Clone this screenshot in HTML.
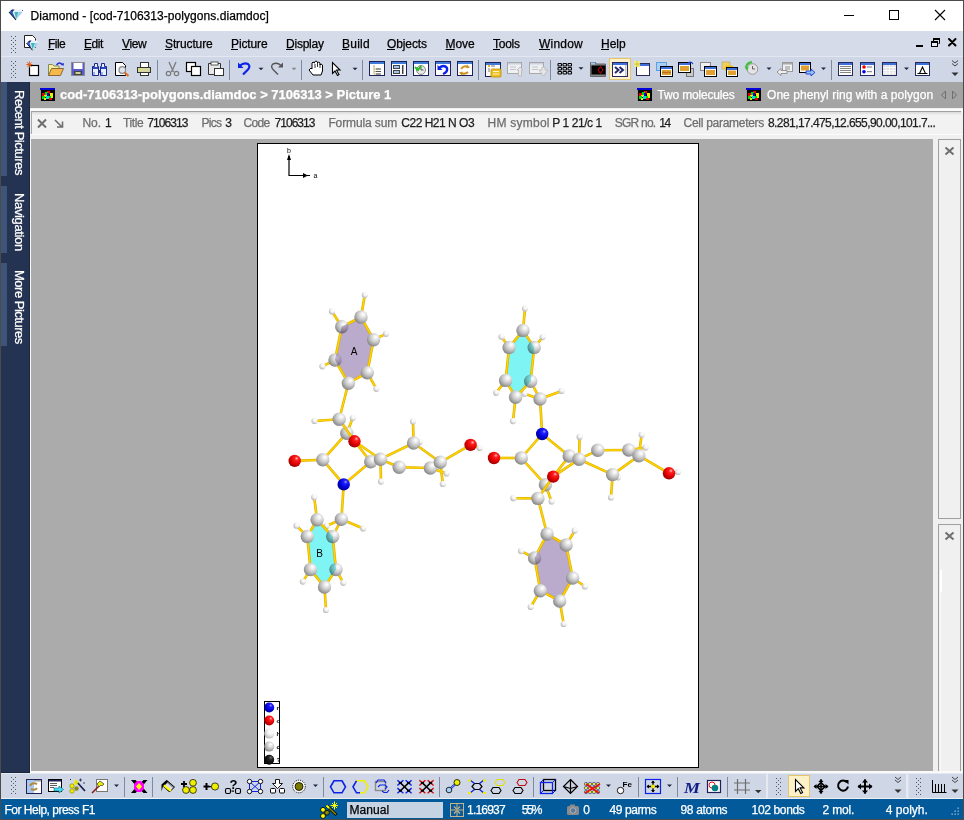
<!DOCTYPE html>
<html><head><meta charset="utf-8">
<style>
html,body{margin:0;padding:0}
body{width:964px;height:820px;position:relative;overflow:hidden;background:#4b4b4b;font-family:"Liberation Sans",sans-serif}
.a{position:absolute}
.t{position:absolute;white-space:nowrap;line-height:1;-webkit-text-stroke:0.25px currentColor}
</style></head><body>
<!-- title bar -->
<div class="a" style="left:1px;top:1px;width:962px;height:30px;background:#fff"></div>
<!-- menubar -->
<div class="a" style="left:1px;top:31px;width:962px;height:25px;background:#d6dbe9"></div>
<div class="a" style="left:1px;top:56px;width:962px;height:1px;background:#e3e7f1"></div>
<!-- toolbar -->
<div class="a" style="left:1px;top:57px;width:962px;height:25px;background:#cfd6e5"></div>
<!-- left sidebar -->
<div class="a" style="left:1px;top:82px;width:29px;height:691px;background:#253352;box-shadow:inset -1px -1px 0 #1b2640"></div>
<div class="a" style="left:1px;top:82px;width:6px;height:94px;background:#3e5478"></div>
<div class="a" style="left:1px;top:186px;width:6px;height:67px;background:#3e5478"></div>
<div class="a" style="left:1px;top:263px;width:6px;height:83px;background:#3e5478"></div>
<!-- doc bar -->
<div class="a" style="left:30px;top:82px;width:933px;height:26px;background:#a4a4a4"></div>
<!-- info strip -->
<div class="a" style="left:30px;top:108px;width:933px;height:31px;background:#f0f0f0"></div>
<div class="a" style="left:30px;top:109px;width:933px;height:2px;background:#fbfbfb"></div>
<div class="a" style="left:30px;top:134px;width:933px;height:1px;background:#fbfbfb"></div>
<div class="a" style="left:31px;top:111px;width:930px;height:23px;box-sizing:border-box;border-top:1px solid #a0a0a0;border-left:1px solid #a8a8a8;background:linear-gradient(#dadada,#e8e8e8 2px,#f2f2f2 3px,#f2f2f2)"></div>
<!-- main grey -->
<div class="a" style="left:30px;top:139px;width:1px;height:634px;background:#fafafa"></div>
<div class="a" style="left:31px;top:139px;width:902px;height:632px;background:#ababab"></div>
<div class="a" style="left:933px;top:139px;width:30px;height:633px;background:#f0f0f0"></div>
<!-- right panels -->
<div class="a" style="left:938px;top:139px;width:23px;height:380px;box-sizing:border-box;border:1px solid #a0a0a0;background:#f0f0f0"></div>
<div class="a" style="left:938px;top:524px;width:23px;height:248px;box-sizing:border-box;border:1px solid #a0a0a0;background:#f0f0f0"></div>
<!-- page -->
<div class="a" style="left:257px;top:143px;width:442px;height:625px;box-sizing:border-box;border:1px solid #000;background:#fff"></div>
<!-- bottom white line + toolbar -->
<div class="a" style="left:30px;top:771px;width:933px;height:2px;background:#fafafa"></div>
<div class="a" style="left:1px;top:773px;width:962px;height:1px;background:#e4e8f1"></div>
<div class="a" style="left:1px;top:774px;width:962px;height:24px;background:#cfd6e5"></div>
<div class="a" style="left:1px;top:798px;width:962px;height:1px;background:#f0f0f0"></div>
<!-- status bar -->
<div class="a" style="left:1px;top:799px;width:962px;height:20px;background:#025a9a"></div>
<div class="a" style="left:347px;top:802px;width:96px;height:16px;background:#c6d3e3"></div>
<div class="t" style="left:25.8px;top:89.5px;font-size:13px;color:#fff;letter-spacing:-0.45px;transform:rotate(90deg);transform-origin:0 0">Recent Pictures</div>
<div class="t" style="left:25.8px;top:193.2px;font-size:13px;color:#fff;letter-spacing:-0.36px;transform:rotate(90deg);transform-origin:0 0">Navigation</div>
<div class="t" style="left:25.8px;top:270px;font-size:13px;color:#fff;letter-spacing:-0.5px;transform:rotate(90deg);transform-origin:0 0">More Pictures</div>
<svg class="a" style="left:0;top:0" width="964" height="820" viewBox="0 0 964 820"><path d="M9,12 L12,9.5 L20.5,9.5 L23,12 L16,19.8 Z" fill="#e6f2f6"/>
<path d="M9.5,12 L12.5,12 L15.5,19 Z" fill="#2f5ad8"/><path d="M14.5,12 L18.5,12 L16,19.5 Z" fill="#38b8b8"/><path d="M19,12 L22.5,12 L16.5,19 Z" fill="#a8c8f0"/><path d="M9.5,11.5 L12,9.5 L14.5,9.5 L12.5,12 Z" fill="#1a2a70"/>
<path d="M9,12 L16,19.8" stroke="#101830" stroke-width="1.1"/><rect x="22" y="10" width="1" height="1" fill="#3050c0"/>
<rect x="844" y="15" width="10" height="1" fill="#000"/>
<rect x="889.5" y="10.5" width="9" height="9" fill="none" stroke="#000"/>
<path d="M935,10 L945,20 M945,10 L935,20" stroke="#000" stroke-width="1.1"/>
<rect x="11" y="36" width="1" height="1" fill="#4a576d"/><rect x="15" y="36" width="1" height="1" fill="#4a576d"/>
<rect x="13" y="38" width="1" height="1" fill="#4a576d"/>
<rect x="11" y="40" width="1" height="1" fill="#4a576d"/><rect x="15" y="40" width="1" height="1" fill="#4a576d"/>
<rect x="13" y="42" width="1" height="1" fill="#4a576d"/>
<rect x="11" y="44" width="1" height="1" fill="#4a576d"/><rect x="15" y="44" width="1" height="1" fill="#4a576d"/>
<rect x="13" y="46" width="1" height="1" fill="#4a576d"/>
<rect x="11" y="48" width="1" height="1" fill="#4a576d"/><rect x="15" y="48" width="1" height="1" fill="#4a576d"/>
<rect x="13" y="50" width="1" height="1" fill="#4a576d"/>
<rect x="11" y="52" width="1" height="1" fill="#4a576d"/><rect x="15" y="52" width="1" height="1" fill="#4a576d"/>
<path d="M24.5,35.5 h8 l3,3 v9 h-11 z" fill="#fff" stroke="#222"/>
<path d="M26.5,43 L29.5,40.5 L37,40.5 L39,43 L32.5,50.3 Z" fill="#e6f2f6"/><path d="M27,43 L29.5,43 L32,50 Z" fill="#2f5ad8"/><path d="M31,43 L35,43 L32.5,50 Z" fill="#38b8b8"/><path d="M35.5,43 L38.5,43 L33,50 Z" fill="#a8c8f0"/><path d="M27,42.5 L29.5,40.5 L31.5,40.5 L29.5,43 Z" fill="#1a2a70"/><path d="M26.5,43 L32.5,50.3" stroke="#101830" stroke-width="1"/>
<rect x="48" y="49" width="6" height="1" fill="#000"/>
<rect x="84" y="49" width="7" height="1" fill="#000"/>
<rect x="122" y="49" width="8" height="1" fill="#000"/>
<rect x="165" y="49" width="7" height="1" fill="#000"/>
<rect x="231" y="49" width="7" height="1" fill="#000"/>
<rect x="286" y="49" width="8" height="1" fill="#000"/>
<rect x="342" y="49" width="7" height="1" fill="#000"/>
<rect x="387" y="49" width="8" height="1" fill="#000"/>
<rect x="445.6" y="49" width="9" height="1" fill="#000"/>
<rect x="493" y="49" width="7" height="1" fill="#000"/>
<rect x="539" y="49" width="11" height="1" fill="#000"/>
<rect x="601" y="49" width="8" height="1" fill="#000"/>
<rect x="916" y="45" width="7" height="2" fill="#000"/>
<path d="M933.5,43.5 v-5 h6 v5 h-1" fill="none" stroke="#000" stroke-width="1"/><rect x="933" y="38" width="7" height="2" fill="#000"/>
<rect x="931.5" y="41.5" width="6" height="5" fill="#e8ebf4" stroke="#000" stroke-width="1"/><rect x="931" y="41" width="7" height="2" fill="#000"/>
<path d="M949,39 L955.5,45.5 M955.5,39 L949,45.5" stroke="#000" stroke-width="2" stroke-linecap="round"/>
<rect x="11" y="61" width="1" height="1" fill="#4a576d"/><rect x="15" y="61" width="1" height="1" fill="#4a576d"/>
<rect x="13" y="63" width="1" height="1" fill="#4a576d"/>
<rect x="11" y="65" width="1" height="1" fill="#4a576d"/><rect x="15" y="65" width="1" height="1" fill="#4a576d"/>
<rect x="13" y="67" width="1" height="1" fill="#4a576d"/>
<rect x="11" y="69" width="1" height="1" fill="#4a576d"/><rect x="15" y="69" width="1" height="1" fill="#4a576d"/>
<rect x="13" y="71" width="1" height="1" fill="#4a576d"/>
<rect x="11" y="73" width="1" height="1" fill="#4a576d"/><rect x="15" y="73" width="1" height="1" fill="#4a576d"/>
<rect x="13" y="75" width="1" height="1" fill="#4a576d"/>
<rect x="11" y="77" width="1" height="1" fill="#4a576d"/><rect x="15" y="77" width="1" height="1" fill="#4a576d"/>
<rect x="29.5" y="65.5" width="9" height="10" fill="#fff" stroke="#000" stroke-width="1.2"/>
<path d="M29.3,61.5 v6 M26.3,64.5 h6 M27.2,62.4 l4.2,4.2 M31.4,62.4 l-4.2,4.2" stroke="#e06020" stroke-width="1"/>
<path d="M48.5,75.5 v-11 h4 l1.5,1.5 h5 v9.5 z" fill="#f6eea0" stroke="#8a8a50"/>
<path d="M48.5,75.5 l3,-7 h12 l-3,7 z" fill="#f5b84a" stroke="#8a6a30"/>
<path d="M56.5,65 q3,-4 6,0" fill="none" stroke="#2030d0" stroke-width="1.3"/><path d="M61,64 l2.5,2 l0.5,-3 z" fill="#2030d0"/>
<rect x="71.5" y="62.5" width="13" height="13" fill="#5a5ad0" stroke="#8a8a8a"/><rect x="73.5" y="63" width="9" height="6" fill="#fff"/><rect x="74" y="71" width="8" height="4" fill="#444"/><rect x="75.5" y="72" width="5" height="2" fill="#d0d090"/>
<path d="M94.5,63.5 h3 v3 h1 v9 h-6 v-9 h2 z M101.5,63.5 h3 v3 h2 v9 h-6 v-9 h1 z" fill="#e8f0fc" stroke="#1a2a90" stroke-width="1"/>
<rect x="93" y="67" width="5" height="2" fill="#2a48c0"/><rect x="101" y="67" width="5" height="2" fill="#2a48c0"/><rect x="98" y="70" width="3" height="3" fill="#1a2a90"/><rect x="93" y="72" width="2" height="3" fill="#9ab0e0"/><rect x="101" y="72" width="2" height="3" fill="#9ab0e0"/>
<path d="M115.5,62.5 h7 l3,3 v10 h-10 z" fill="#fff" stroke="#000"/>
<circle cx="122.3" cy="70" r="3.3" fill="#dde6f0" stroke="#8a8a8a" stroke-width="1.2"/><path d="M124.5,72.5 l4,3.5" stroke="#e07020" stroke-width="2.2"/>
<rect x="140.5" y="62.5" width="8" height="5" fill="#fff" stroke="#333"/><rect x="137.5" y="67.5" width="13" height="5" fill="#d6d6a0" stroke="#333"/><rect x="140.5" y="72.5" width="8" height="3" fill="#fff" stroke="#333"/><rect x="139" y="68.5" width="1" height="1" fill="#ee0"/><rect x="141" y="68.5" width="1" height="1" fill="#ee0"/>
<rect x="157" y="60" width="1" height="20" fill="#7d8aa0"/>
<path d="M169,62 L173.5,72 M176,62 L171.5,72" stroke="#7a7a7a" stroke-width="1.3" fill="none"/><circle cx="168.5" cy="73.5" r="2.2" fill="none" stroke="#7a7a7a" stroke-width="1.2"/><circle cx="176.5" cy="73.5" r="2.2" fill="none" stroke="#7a7a7a" stroke-width="1.2"/>
<rect x="186.5" y="62.5" width="9" height="9" fill="#fff" stroke="#000" stroke-width="1.2"/><rect x="191.5" y="66.5" width="9" height="9" fill="#fff" stroke="#000" stroke-width="1.2"/>
<path d="M208.5,63.5 h12 v11 h-12 z" fill="#e8e8e8" stroke="#333"/><rect x="211" y="62" width="7" height="3" fill="#fff" stroke="#333" stroke-width="0.8"/><rect x="214.5" y="68.5" width="9" height="7" fill="#fff" stroke="#333"/>
<rect x="229" y="60" width="1" height="20" fill="#7d8aa0"/>
<path d="M240,65.5 q4,-3.5 8,-1.5 q3,2.5 -0.5,6 l-4.5,4.5" fill="none" stroke="#0b22e8" stroke-width="2.2"/><path d="M238,62.5 v5.5 h5.5 z" fill="#0b22e8"/>
<path d="M258.5,67.7 h5 l-2.5,2.5 z" fill="#1e2a40"/>
<path d="M281,65.5 q-4,-3.5 -8,-1.5 q-3,2.5 0.5,6 l4.5,4.5" fill="none" stroke="#555" stroke-width="1.4"/><path d="M283,62.5 v5 h-5 z" fill="#555"/>
<path d="M291.5,67.7 h5 l-2.5,2.5 z" fill="#8a8a8a"/>
<rect x="301" y="60" width="1" height="20" fill="#7d8aa0"/>
<path d="M311,68 l-2,2 l4,5 h8 l1.5,-4 v-6 l-1.5,-1 l-1,1 v-2 l-1.5,-1 l-1,1 v-1 l-1.5,-1 l-1.5,1 v1 l-1.5,-1 l-1,1 v6 z" fill="#fff" stroke="#000" stroke-width="1"/>
<path d="M315,64 v4 M317.5,63 v4 M320,64 v4" stroke="#000" stroke-width="0.8"/>
<path d="M332.5,62.5 v11 l2.5,-2.5 l2.5,4.5 l1.5,-1 l-2.5,-4.5 h3.5 z" fill="#fff" stroke="#000" stroke-width="1.1"/>
<path d="M352.5,67.7 h5 l-2.5,2.5 z" fill="#1e2a40"/>
<rect x="362" y="60" width="1" height="20" fill="#7d8aa0"/>
<rect x="369.5" y="61.5" width="15" height="14" fill="#fff" stroke="#1d2157"/>
<rect x="370" y="62" width="14" height="2" fill="#3f7bd8"/>
<path d="M373,66 h2 M374,66 v8 M374,69 h6 M374,71.5 h6 M374,74 h6" stroke="#b0a860" stroke-width="0.8" fill="none"/><path d="M376,69 h5 M376,71.5 h5 M376,74 h5" stroke="#555" stroke-width="1"/>
<rect x="391.5" y="61.5" width="15" height="14" fill="#fff" stroke="#1d2157"/>
<rect x="392" y="62" width="14" height="2" fill="#3f7bd8"/>
<rect x="393.5" y="65.5" width="6" height="3" fill="#9cc4ec" stroke="#444"/><rect x="393.5" y="70.5" width="6" height="3" fill="#9cc4ec" stroke="#444"/><rect x="402" y="65" width="1.5" height="9" fill="#444"/>
<rect x="413.5" y="61.5" width="15" height="14" fill="#fff" stroke="#1d2157"/>
<rect x="414" y="62" width="14" height="2" fill="#3f7bd8"/>
<circle cx="421" cy="70" r="4.5" fill="#e8e8e8" stroke="#888"/><path d="M421,67 v3 h2.5" stroke="#333" stroke-width="0.8" fill="none"/><path d="M415,67 l3,3 l3,-4" stroke="#20c020" stroke-width="2" fill="none"/>
<rect x="435.5" y="61.5" width="15" height="14" fill="#fff" stroke="#1d2157"/>
<rect x="436" y="62" width="14" height="2" fill="#3f7bd8"/>
<path d="M439,68 q5,-4 8,0 q1,4 -4,6" fill="none" stroke="#0b22e8" stroke-width="2.4"/><path d="M437.5,65 v5 h5 z" fill="#0b22e8"/>
<rect x="457.5" y="61.5" width="15" height="14" fill="#fff" stroke="#1d2157"/>
<rect x="458" y="62" width="14" height="2" fill="#3f7bd8"/>
<path d="M461,69 q3,-4 7,-2 M468,72 q-3,3 -7,1" stroke="#d09020" stroke-width="2" fill="none"/><path d="M467,64.5 l3,3 l-3.5,1 z M462,75.5 l-3,-3 l3.5,-1 z" fill="#d09020"/>
<rect x="478" y="60" width="1" height="20" fill="#7d8aa0"/>
<rect x="485.5" y="62.5" width="15" height="14" fill="#fff" stroke="#1d2157"/>
<rect x="486" y="63" width="14" height="2" fill="#3f7bd8"/>
<rect x="491" y="69" width="10" height="8" rx="1" fill="#f0c020" stroke="#c09000" stroke-width="0.8"/><path d="M493,71.5 h6 M493,74 h6" stroke="#fff" stroke-width="0.8"/><rect x="488" y="65" width="2" height="2" fill="#f4b020"/><path d="M491,66 h4 M488,69 h2 M488,71 h2" stroke="#444" stroke-width="0.7"/>
<rect x="507.5" y="62.5" width="14" height="11" fill="#eef0f4" stroke="#a8a8a8"/><rect x="508" y="63" width="13" height="1.5" fill="#c8d0e0"/><path d="M510,67 h6 M510,69.5 h6" stroke="#b8b8b8" stroke-width="0.8"/>
<rect x="529.5" y="62.5" width="14" height="11" fill="#eef0f4" stroke="#a8a8a8"/><rect x="530" y="63" width="13" height="1.5" fill="#c8d0e0"/><path d="M532,67 h6 M532,69.5 h6" stroke="#b8b8b8" stroke-width="0.8"/>
<path d="M517,70 l3,-3 l3,3 h-1.5 v6 h-3 v-6 z" fill="#e6e6e6" stroke="#b8b8b8" stroke-width="0.8"/>
<path d="M539,70 h3 v-3 h3 v3 h3 l-4.5,6 z" fill="#e6e6e6" stroke="#b8b8b8" stroke-width="0.8"/>
<rect x="550" y="60" width="1" height="20" fill="#7d8aa0"/>
<rect x="558" y="63.5" width="3.5" height="2.5" rx="0.7" fill="none" stroke="#000" stroke-width="1.1"/>
<rect x="563" y="63.5" width="3.5" height="2.5" rx="0.7" fill="none" stroke="#000" stroke-width="1.1"/>
<rect x="568" y="63.5" width="3.5" height="2.5" rx="0.7" fill="none" stroke="#000" stroke-width="1.1"/>
<rect x="558" y="67.5" width="3.5" height="2.5" rx="0.7" fill="none" stroke="#000" stroke-width="1.1"/>
<rect x="563" y="67.5" width="3.5" height="2.5" rx="0.7" fill="none" stroke="#000" stroke-width="1.1"/>
<rect x="568" y="67.5" width="3.5" height="2.5" rx="0.7" fill="none" stroke="#000" stroke-width="1.1"/>
<rect x="558" y="71.5" width="3.5" height="2.5" rx="0.7" fill="none" stroke="#000" stroke-width="1.1"/>
<rect x="563" y="71.5" width="3.5" height="2.5" rx="0.7" fill="none" stroke="#000" stroke-width="1.1"/>
<rect x="568" y="71.5" width="3.5" height="2.5" rx="0.7" fill="none" stroke="#000" stroke-width="1.1"/>
<path d="M578.5,67.3 h5 l-2.5,2.5 z" fill="#1e2a40"/>
<path d="M590.5,76.5 v-14 h5 l1,1.5 h9 v12.5 z" fill="#888" stroke="#666"/><rect x="591" y="62.5" width="4" height="2" fill="#9cc8f0"/><rect x="591.5" y="65.5" width="14" height="9" fill="#000"/><path d="M600.5,66.5 l2.5,3.5 l-2.5,3.5 l-2.5,-3.5 z" fill="none" stroke="#e00000" stroke-width="1"/>
<rect x="609.5" y="58.5" width="21" height="21" fill="#fcf1c8" stroke="#e4c56c"/>
<rect x="612.5" y="62.5" width="15" height="14" fill="#fff" stroke="#252a5a"/>
<rect x="613" y="63" width="14" height="2" fill="#3f6fd8"/>
<path d="M615,67 l3.5,3 l-3.5,3 M619.5,67 l3.5,3 l-3.5,3" fill="none" stroke="#252a6a" stroke-width="2"/><rect x="625" y="65" width="1.5" height="11" fill="#c8c8c8"/>
<rect x="636.5" y="63.5" width="13" height="12" fill="#fff" stroke="#252a5a"/><rect x="637" y="64" width="12" height="2" fill="#3f6fd8"/><rect x="634" y="61" width="6" height="6" fill="#f0f080" opacity="0.9"/><path d="M637,61 v6 M634,64 h6" stroke="#e0c020" stroke-width="0.8"/>
<rect x="656.5" y="62.5" width="10" height="8" fill="#a8d0f4" stroke="#5aa0e8"/>
<rect x="660.5" y="66.5" width="12" height="10" fill="#fff" stroke="#000"/>
<rect x="661" y="67" width="11" height="2" fill="#3f6fd8"/>
<rect x="662" y="70" width="9" height="5" fill="#e0a030"/><path d="M662,73 q2,-2 4,0 q2,-2 5,0" fill="none" stroke="#b06010" stroke-width="1"/>
<rect x="686.5" y="68.5" width="7" height="8" fill="#c8c8c8" stroke="#777"/>
<rect x="678.5" y="62.5" width="12" height="10" fill="#fff" stroke="#000"/>
<rect x="679" y="63" width="11" height="2" fill="#3f6fd8"/>
<rect x="680" y="66" width="9" height="5" fill="#e0a030"/><path d="M688,63 q3,-2 5,1" stroke="#2040d0" stroke-width="1.2" fill="none"/>
<rect x="700.5" y="62.5" width="10" height="8" fill="#f0f0f0" stroke="#888"/>
<rect x="704.5" y="66.5" width="12" height="10" fill="#fff" stroke="#000"/>
<rect x="705" y="67" width="11" height="2" fill="#3f6fd8"/>
<rect x="706" y="70" width="9" height="5" fill="#e0a030"/>
<rect x="722" y="62" width="8" height="7" fill="#f0d060" stroke="#b0a060" stroke-width="0.6"/><rect x="725" y="65.5" width="8" height="5" fill="#f0c020"/>
<rect x="726.5" y="67.5" width="11" height="9" fill="#fff" stroke="#000"/>
<rect x="727" y="68" width="10" height="2" fill="#3f6fd8"/>
<rect x="728" y="70.5" width="8" height="4.5" fill="#e0a030"/>
<circle cx="752.5" cy="69" r="5.3" fill="#e4e4e4" stroke="#999"/><path d="M752.5,66 v3 h2.5" stroke="#444" stroke-width="0.8" fill="none"/><path d="M746,68 q0,-5 6,-6" stroke="#40c040" stroke-width="2" fill="none"/><path d="M744.5,66.5 l2,4 l2.5,-3 z" fill="#40c040"/>
<path d="M766.5,67.5 h5 l-2.5,2.5 z" fill="#1e2a40"/>
<rect x="782.5" y="62.5" width="10" height="9" fill="#f0f0f0" stroke="#999"/><rect x="783" y="63" width="9" height="1.5" fill="#aaa"/><rect x="785" y="66" width="5" height="4" fill="#c0c0c0"/>
<path d="M777,72 l4,-3.5 v2 h6 v3 h-6 v2 z" fill="#f0f0f0" stroke="#8a8a8a" stroke-width="0.9"/>
<rect x="799.5" y="62.5" width="11" height="10" fill="#fff" stroke="#000"/>
<rect x="800" y="63" width="10" height="2" fill="#3f6fd8"/>
<rect x="801" y="65.5" width="8" height="5" fill="#e0a030"/><path d="M815,72.5 l-4,-3.5 v2 h-5 v3 h5 v2 z" fill="#90c0f8" stroke="#1a3ad0" stroke-width="0.9"/>
<path d="M821,67.5 h5 l-2.5,2.5 z" fill="#1e2a40"/>
<rect x="831" y="60" width="1" height="20" fill="#7d8aa0"/>
<rect x="838.5" y="62.5" width="14" height="13" fill="#fff" stroke="#252a5a"/>
<rect x="839" y="63" width="13" height="2" fill="#3f6fd8"/>
<path d="M840,66.5 h11 M840,68.5 h11 M840,70.5 h11 M840,72.5 h11" stroke="#777" stroke-width="0.9"/>
<rect x="860.5" y="62.5" width="14" height="13" fill="#fff" stroke="#252a5a"/>
<rect x="861" y="63" width="13" height="2" fill="#3f6fd8"/>
<circle cx="864" cy="67" r="1.8" fill="#e00"/><circle cx="864" cy="71.7" r="1.8" fill="#00e"/><path d="M867,67 h5 M867,71.7 h5" stroke="#777" stroke-width="1"/>
<rect x="882.5" y="62.5" width="14" height="13" fill="#e0e0e0" stroke="#252a5a"/>
<rect x="883" y="63" width="13" height="2" fill="#3f6fd8"/>
<path d="M883,67.5 h13 M883,70.5 h13 M883,73 h13 M886,65 v10 M889.5,65 v10 M893,65 v10" stroke="#fff" stroke-width="0.8"/>
<path d="M904,67.5 h5 l-2.5,2.5 z" fill="#1e2a40"/>
<rect x="915.5" y="62.5" width="14" height="13" fill="#fff" stroke="#252a5a"/>
<rect x="916" y="63" width="13" height="2" fill="#3f6fd8"/>
<path d="M917.5,73.5 h10 M919.5,73.5 l3,-6.5 l3,6.5" fill="none" stroke="#000" stroke-width="1.1"/>
<path d="M952,60.5 l3,2.5 l3,-2.5 M952,63.5 l3,2.5 l3,-2.5" fill="none" stroke="#333" stroke-width="0.9"/><path d="M951.5,72.5 h7 l-3.5,3.5 z" fill="#333"/>
<rect x="40" y="88" width="15" height="13" fill="#000"/><rect x="40" y="88" width="15" height="2" fill="#0000d8"/><rect x="40" y="90" width="1" height="11" fill="#9a9a9a"/>
<rect x="47" y="91" width="3" height="3" fill="#ee0000"/>
<rect x="45" y="92" width="3" height="3" fill="#00dd00"/>
<rect x="42" y="93" width="3" height="3" fill="#ee0000"/>
<rect x="50" y="93" width="3" height="3" fill="#eeee00"/>
<rect x="47" y="93" width="2" height="4" fill="#0000ee"/>
<rect x="44" y="95" width="3" height="2" fill="#eeee00"/>
<rect x="42" y="96" width="3" height="3" fill="#00dd00"/>
<rect x="46" y="96" width="3" height="3" fill="#00dddd"/>
<rect x="49" y="96" width="3" height="3" fill="#00dd00"/>
<rect x="51" y="95" width="2" height="3" fill="#eeee00"/>
<rect x="49" y="98" width="3" height="2" fill="#ee0000"/>
<rect x="44" y="98" width="2" height="2" fill="#eeee00"/>
<rect x="637" y="88" width="15" height="13" fill="#000"/><rect x="637" y="88" width="15" height="2" fill="#0000d8"/><rect x="637" y="90" width="1" height="11" fill="#9a9a9a"/>
<rect x="644" y="91" width="3" height="3" fill="#ee0000"/>
<rect x="642" y="92" width="3" height="3" fill="#00dd00"/>
<rect x="639" y="93" width="3" height="3" fill="#ee0000"/>
<rect x="647" y="93" width="3" height="3" fill="#eeee00"/>
<rect x="644" y="93" width="2" height="4" fill="#0000ee"/>
<rect x="641" y="95" width="3" height="2" fill="#eeee00"/>
<rect x="639" y="96" width="3" height="3" fill="#00dd00"/>
<rect x="643" y="96" width="3" height="3" fill="#00dddd"/>
<rect x="646" y="96" width="3" height="3" fill="#00dd00"/>
<rect x="648" y="95" width="2" height="3" fill="#eeee00"/>
<rect x="646" y="98" width="3" height="2" fill="#ee0000"/>
<rect x="641" y="98" width="2" height="2" fill="#eeee00"/>
<rect x="746" y="88" width="15" height="13" fill="#000"/><rect x="746" y="88" width="15" height="2" fill="#0000d8"/><rect x="746" y="90" width="1" height="11" fill="#9a9a9a"/>
<rect x="753" y="91" width="3" height="3" fill="#ee0000"/>
<rect x="751" y="92" width="3" height="3" fill="#00dd00"/>
<rect x="748" y="93" width="3" height="3" fill="#ee0000"/>
<rect x="756" y="93" width="3" height="3" fill="#eeee00"/>
<rect x="753" y="93" width="2" height="4" fill="#0000ee"/>
<rect x="750" y="95" width="3" height="2" fill="#eeee00"/>
<rect x="748" y="96" width="3" height="3" fill="#00dd00"/>
<rect x="752" y="96" width="3" height="3" fill="#00dddd"/>
<rect x="755" y="96" width="3" height="3" fill="#00dd00"/>
<rect x="757" y="95" width="2" height="3" fill="#eeee00"/>
<rect x="755" y="98" width="3" height="2" fill="#ee0000"/>
<rect x="750" y="98" width="2" height="2" fill="#eeee00"/>
<path d="M945.5,91 l-4,4 l4,4 z" fill="none" stroke="#6e6e6e"/><path d="M952.5,91 l4,4 l-4,4 z" fill="none" stroke="#6e6e6e"/>
<path d="M38,119.5 l8,8 M46,119.5 l-8,8" stroke="#6e6e6e" stroke-width="2"/>
<path d="M55,120 l6.5,6.5 M62.5,121.5 v5.5 h-5.5" stroke="#6e6e6e" stroke-width="1.6" fill="none"/>
<path d="M945.5,147.5 l8,7 M953.5,147.5 l-8,7" stroke="#6e6e6e" stroke-width="2"/>
<path d="M945.5,532.5 l8,7 M953.5,532.5 l-8,7" stroke="#6e6e6e" stroke-width="2"/>
<rect x="940" y="570" width="2" height="22" fill="#fff"/><rect x="940" y="592" width="1" height="178" fill="#fafafa"/>
<rect x="11" y="777" width="1" height="1" fill="#4a576d"/><rect x="15" y="777" width="1" height="1" fill="#4a576d"/>
<rect x="13" y="779" width="1" height="1" fill="#4a576d"/>
<rect x="11" y="781" width="1" height="1" fill="#4a576d"/><rect x="15" y="781" width="1" height="1" fill="#4a576d"/>
<rect x="13" y="783" width="1" height="1" fill="#4a576d"/>
<rect x="11" y="785" width="1" height="1" fill="#4a576d"/><rect x="15" y="785" width="1" height="1" fill="#4a576d"/>
<rect x="13" y="787" width="1" height="1" fill="#4a576d"/>
<rect x="11" y="789" width="1" height="1" fill="#4a576d"/><rect x="15" y="789" width="1" height="1" fill="#4a576d"/>
<rect x="13" y="791" width="1" height="1" fill="#4a576d"/>
<rect x="11" y="793" width="1" height="1" fill="#4a576d"/><rect x="15" y="793" width="1" height="1" fill="#4a576d"/>
<rect x="26.5" y="779.5" width="15" height="14" fill="#fff" stroke="#1d2157"/><rect x="27" y="780" width="7" height="13" fill="#a8c8f0"/><rect x="34" y="780" width="7" height="1.5" fill="#a0a0a0"/><path d="M30,786 q2,-4 7,-2 M37,788 q-2,3 -6,1" stroke="#b08a40" stroke-width="2" fill="none"/>
<rect x="48.5" y="779.5" width="13" height="12" fill="#fff" stroke="#000"/><rect x="49" y="780" width="12" height="1.5" fill="#1d2157"/><path d="M50,783.5 h7 M50,785.5 h7 M50,787.5 h4" stroke="#333" stroke-width="0.8"/><path d="M54,788 h5 v-2 l4.5,3.5 l-4.5,3.5 v-2 h-5 z" fill="#40e0f0" stroke="#1a5a80" stroke-width="0.6"/>
<circle cx="72" cy="786" r="2.2" fill="#ee0" stroke="#660" stroke-width="0.5"/><circle cx="72" cy="791" r="2.2" fill="#ee0" stroke="#660" stroke-width="0.5"/><circle cx="76.5" cy="788.5" r="2.2" fill="#8a8a20"/><circle cx="76" cy="783" r="2" fill="#ee0"/><path d="M76,781 l9,10" stroke="#1d2157" stroke-width="1.8"/><path d="M75,780 l3,3" stroke="#ee0" stroke-width="1.8"/><path d="M79,780 h3 M80.5,778.5 v3 M83,783 h2" stroke="#1d2157" stroke-width="0.8"/><rect x="70" y="779" width="1" height="1" fill="#1d2157"/>
<rect x="96.5" y="779.5" width="11" height="12" fill="#fff" stroke="#777"/><path d="M92,793 l7,-7" stroke="#8a1a1a" stroke-width="1.6"/><path d="M97,784 l3,-3 l4,3 l-2,2 l-1,-1 l-2,2 z" fill="#ee0" stroke="#333" stroke-width="0.7"/>
<path d="M114,784.6 h5 l-2.5,2.5 z" fill="#1e2a40"/>
<rect x="124" y="777" width="1" height="20" fill="#7d8aa0"/>
<path d="M131,780 h4.5 l4,4 l4,-4 h4 l-5.5,6.5 l5.5,6.5 h-4 l-4,-4 l-4,4 h-4.5 l5.5,-6.5 z" fill="#000"/>
<path d="M137,781 h4 l3,3 v5 l-3,3 h-4 l-3,-3 v-5 z" fill="#ff00ff"/><path d="M139,783 l3,3.5 l-3,3.5 l-3,-3.5 z" fill="#ffff00"/>
<rect x="152" y="777" width="1" height="20" fill="#7d8aa0"/>
<path d="M161.5,791.5 v-7 l5,-4.5 l1,0.5 l7.5,6.5 l-5,5 l-1,0 l-6,-5.5 z" fill="#000"/>
<path d="M164,786 l3.5,-3.5 l6,5 l-3.5,3.5 z" fill="#d8dce8"/><path d="M164,786 l6,5 l0.8,-0.8 l-6,-5 z" fill="#ffff00" stroke="#ffff00" stroke-width="1.2"/><path d="M167.5,782.5 l6,5" stroke="#888" stroke-width="1.2"/>
<path d="M181,784 h6 M184,781 v6" stroke="#000" stroke-width="1.8"/><circle cx="193" cy="782.8" r="3.4" fill="#ee0" stroke="#000" stroke-width="0.7"/><circle cx="186" cy="790" r="3.4" fill="#ee0" stroke="#000" stroke-width="0.7"/><circle cx="193" cy="790" r="3.4" fill="#ee0" stroke="#000" stroke-width="0.7"/>
<path d="M203.5,786.5 h6 M206.5,783 v7" stroke="#000" stroke-width="2"/><rect x="209" y="786" width="3" height="1.2" fill="#000"/><circle cx="215" cy="786.5" r="3.6" fill="#ee0" stroke="#000" stroke-width="0.7"/>
<text x="229.5" y="788.5" font-family="Liberation Sans" font-weight="bold" font-size="13" fill="#000">?</text><rect x="225.5" y="788.5" width="5" height="5" rx="1.5" fill="none" stroke="#000" stroke-width="1.1"/><rect x="235.5" y="788.5" width="5" height="5" rx="1.5" fill="none" stroke="#000" stroke-width="1.1"/><rect x="231.5" y="790.5" width="2.5" height="1.2" fill="#000"/>
<path d="M249.5,781.5 h11 v10 h-11 z M249.5,781.5 l11,10 M260.5,781.5 l-11,10" fill="none" stroke="#0b22e8" stroke-width="1"/>
<circle cx="249.5" cy="781.5" r="2.2" fill="#fff" stroke="#000" stroke-width="0.9"/>
<circle cx="260.5" cy="781.5" r="2.2" fill="#fff" stroke="#000" stroke-width="0.9"/>
<circle cx="249.5" cy="791.5" r="2.2" fill="#fff" stroke="#000" stroke-width="0.9"/>
<circle cx="260.5" cy="791.5" r="2.2" fill="#fff" stroke="#000" stroke-width="0.9"/>
<rect x="270.5" y="788.5" width="5" height="4.5" rx="1" fill="#fff" stroke="#000"/><rect x="279.5" y="788.5" width="5" height="4.5" rx="1" fill="#fff" stroke="#000"/><path d="M275.5,779.5 h4 v4 h3 l-5,5 l-5,-5 h3 z" fill="#fff" stroke="#000" stroke-width="0.9"/>
<circle cx="299" cy="786.5" r="6.3" fill="#fff" stroke="#000" stroke-width="1" stroke-dasharray="1,1"/><circle cx="299" cy="786.5" r="4" fill="#7a7a00" stroke="#000" stroke-width="0.8"/>
<path d="M313,784.5 h5 l-2.5,2.5 z" fill="#1e2a40"/>
<rect x="323" y="777" width="1" height="20" fill="#7d8aa0"/>
<path d="M334,780.8 h8 l3.5,6 l-3.5,6 h-8 l-3.5,-6 z" fill="none" stroke="#0b22e8" stroke-width="1.6"/>
<path d="M356.5,780.8 h8 l3.5,6 l-3.5,6 h-4.5" fill="none" stroke="#f0f000" stroke-width="1.6"/><path d="M360,792.8 h-3.5 l-3.5,-6 l3.5,-6" fill="none" stroke="#0b22e8" stroke-width="1.6"/>
<rect x="375.5" y="781.5" width="10" height="9" fill="none" stroke="#8a8a8a" stroke-width="1.4"/><path d="M376,783 l2,-3 h6 l2,3 M378,787 l2,-2 h5 l2,2 l-2,2 M382,791 l2,1.5 h3 l2,-2.5" fill="none" stroke="#0b22e8" stroke-width="1.2"/>
<path d="M400.4,782.9 l-3,-2.6 M400.4,782.9 l3,-2.6 M400.4,782.9 l-3,2.6 M408.6,782.9 l-3,-2.6 M408.6,782.9 l3,-2.6 M408.6,782.9 l3,2.6 M400.4,790.7 l-3,-2.6 M400.4,790.7 l-3,2.6 M400.4,790.7 l3,2.6 M408.6,790.7 l3,-2.6 M408.6,790.7 l-3,2.6 M408.6,790.7 l3,2.6" stroke="#0b22e8" stroke-width="1.4" fill="none"/><path d="M400.4,782.9 L408.6,790.7 M408.6,782.9 L400.4,790.7" stroke="#000" stroke-width="1.5"/><rect x="398.9" y="781.9" width="3" height="2" fill="#000"/><rect x="407.1" y="781.9" width="3" height="2" fill="#000"/><rect x="398.9" y="789.7" width="3" height="2" fill="#000"/><rect x="407.1" y="789.7" width="3" height="2" fill="#000"/>
<path d="M422.4,782.9 l-3,-2.6 M422.4,782.9 l3,-2.6 M422.4,782.9 l-3,2.6 M430.6,782.9 l-3,-2.6 M430.6,782.9 l3,-2.6 M430.6,782.9 l3,2.6 M422.4,790.7 l-3,-2.6 M422.4,790.7 l-3,2.6 M422.4,790.7 l3,2.6 M430.6,790.7 l3,-2.6 M430.6,790.7 l-3,2.6 M430.6,790.7 l3,2.6" stroke="#d01010" stroke-width="1.4" fill="none"/><path d="M422.4,782.9 L430.6,790.7 M430.6,782.9 L422.4,790.7" stroke="#000" stroke-width="1.5"/><rect x="420.9" y="781.9" width="3" height="2" fill="#000"/><rect x="429.1" y="781.9" width="3" height="2" fill="#000"/><rect x="420.9" y="789.7" width="3" height="2" fill="#000"/><rect x="429.1" y="789.7" width="3" height="2" fill="#000"/>
<rect x="439" y="777" width="1" height="20" fill="#7d8aa0"/>
<path d="M449,790 l8,-7.5" stroke="#0b22e8" stroke-width="2.2"/><path d="M449,790 l8,-7.5" stroke="#a8d0f0" stroke-width="0.8"/><circle cx="449" cy="790" r="2.8" fill="#a8d0f0" stroke="#000" stroke-width="0.8"/><circle cx="457" cy="782.5" r="3" fill="#ee0" stroke="#000" stroke-width="0.8"/>
<path d="M472,786.5 l2.5,-3 h5 l2.5,3 l-2.5,3 h-5 z" fill="none" stroke="#000" stroke-width="1.2"/><path d="M474.5,783.5 l-4.5,-3.5 M479.5,783.5 l4.5,-3.5 M474.5,789.5 l-4.5,3.5 M479.5,789.5 l4.5,3.5" stroke="#0b22e8" stroke-width="1.3"/><rect x="468" y="779.5" width="3" height="2" fill="#ee0"/><rect x="483" y="779.5" width="3" height="2" fill="#ee0"/><rect x="468" y="792" width="3" height="2" fill="#ee0"/><rect x="483" y="792" width="3" height="2" fill="#ee0"/>
<path d="M495,782.5 l2,-3 h6 l2,3 l-2,3 h-6 z" fill="none" stroke="#e0e000" stroke-width="1.1"/><path d="M491,790.5 l2,-3 h6 l2,3 l-2,3 h-6 z" fill="none" stroke="#000" stroke-width="1.1"/>
<path d="M517,782.5 l2,-3 h6 l2,3 l-2,3 h-6 z" fill="none" stroke="#c01010" stroke-width="1.1"/><path d="M513,790.5 l2,-3 h6 l2,3 l-2,3 h-6 z" fill="none" stroke="#000" stroke-width="1.1"/>
<rect x="533" y="777" width="1" height="20" fill="#7d8aa0"/>
<rect x="543.5" y="779.5" width="12" height="11" fill="none" stroke="#000" stroke-width="1.3"/><rect x="540.5" y="782.5" width="12" height="11" fill="none" stroke="#0b22e8" stroke-width="1.3"/><path d="M540.5,782.5 l3,-3 M552.5,782.5 l3,-3 M540.5,793.5 l3,-3 M552.5,793.5 l3,-3" stroke="#0b22e8" stroke-width="1"/>
<path d="M570.5,779.5 l7,7 l-7,7 l-7,-7 z M570.5,779.5 v14 M563.5,786.5 l7,2 l7,-2" fill="none" stroke="#000" stroke-width="1.2"/>
<circle cx="586" cy="784" r="1.7" fill="#ee0" stroke="#1a2ad0" stroke-width="0.6"/>
<circle cx="590" cy="784" r="1.7" fill="#ee0" stroke="#1a2ad0" stroke-width="0.6"/>
<circle cx="594" cy="784" r="1.7" fill="#ee0" stroke="#1a2ad0" stroke-width="0.6"/>
<circle cx="598" cy="784" r="1.7" fill="#ee0" stroke="#1a2ad0" stroke-width="0.6"/>
<circle cx="586" cy="788" r="1.7" fill="#ee0" stroke="#1a2ad0" stroke-width="0.6"/>
<circle cx="590" cy="788" r="1.7" fill="#ee0" stroke="#1a2ad0" stroke-width="0.6"/>
<circle cx="594" cy="788" r="1.7" fill="#ee0" stroke="#1a2ad0" stroke-width="0.6"/>
<circle cx="598" cy="788" r="1.7" fill="#ee0" stroke="#1a2ad0" stroke-width="0.6"/>
<circle cx="586" cy="792" r="1.7" fill="#ee0" stroke="#1a2ad0" stroke-width="0.6"/>
<circle cx="590" cy="792" r="1.7" fill="#ee0" stroke="#1a2ad0" stroke-width="0.6"/>
<circle cx="594" cy="792" r="1.7" fill="#ee0" stroke="#1a2ad0" stroke-width="0.6"/>
<circle cx="598" cy="792" r="1.7" fill="#ee0" stroke="#1a2ad0" stroke-width="0.6"/>
<path d="M585,793 l15,-9 M586,784 l13,9" stroke="#ee1010" stroke-width="1.6"/>
<path d="M606,784.5 h5 l-2.5,2.5 z" fill="#1e2a40"/>
<circle cx="620.5" cy="790.5" r="3.2" fill="#fff" stroke="#000" stroke-width="0.9"/><text x="622.5" y="786.5" font-family="Liberation Sans" font-weight="bold" font-size="8" fill="#000">Fe</text>
<rect x="638" y="777" width="1" height="20" fill="#7d8aa0"/>
<rect x="645.5" y="779.5" width="15" height="14" fill="none" stroke="#0b22e8" stroke-width="1.2"/><path d="M653,781 v11 M647,786.5 h12" stroke="#000" stroke-width="1.4"/><path d="M653,780.5 l-2,2.5 h4 z M653,792.5 l-2,-2.5 h4 z M646.5,786.5 l2.5,-2 v4 z M659.5,786.5 l-2.5,-2 v4 z" fill="#000"/><circle cx="653" cy="786.5" r="2" fill="#ee0"/>
<path d="M667,784.5 h5 l-2.5,2.5 z" fill="#1e2a40"/>
<rect x="677" y="777" width="1" height="20" fill="#7d8aa0"/>
<text x="684" y="792.5" font-family="Liberation Serif" font-weight="bold" font-style="italic" font-size="14.5" fill="#10208a" textLength="16" lengthAdjust="spacingAndGlyphs">M</text>
<rect x="707.5" y="780.5" width="13" height="12" fill="#fff" stroke="#1d2157" stroke-width="1.2"/><circle cx="712" cy="785" r="3" fill="none" stroke="#e00000" stroke-width="0.9"/><circle cx="715" cy="788" r="3.3" fill="#008080"/>
<rect x="727" y="777" width="1" height="20" fill="#7d8aa0"/>
<path d="M734,783 h16 M734,790 h16 M737.5,779 v15 M745.5,779 v15" stroke="#6e6e6e" stroke-width="1.2"/>
<path d="M755,790 h6.5 l-3.25,3.25 z" fill="#333"/>
<rect x="766" y="773" width="2" height="25" fill="#e6e9f2"/>
<rect x="776" y="778" width="1" height="1" fill="#4a576d"/><rect x="780" y="778" width="1" height="1" fill="#4a576d"/>
<rect x="778" y="780" width="1" height="1" fill="#4a576d"/>
<rect x="776" y="782" width="1" height="1" fill="#4a576d"/><rect x="780" y="782" width="1" height="1" fill="#4a576d"/>
<rect x="778" y="784" width="1" height="1" fill="#4a576d"/>
<rect x="776" y="786" width="1" height="1" fill="#4a576d"/><rect x="780" y="786" width="1" height="1" fill="#4a576d"/>
<rect x="778" y="788" width="1" height="1" fill="#4a576d"/>
<rect x="776" y="790" width="1" height="1" fill="#4a576d"/><rect x="780" y="790" width="1" height="1" fill="#4a576d"/>
<rect x="778" y="792" width="1" height="1" fill="#4a576d"/>
<rect x="776" y="794" width="1" height="1" fill="#4a576d"/><rect x="780" y="794" width="1" height="1" fill="#4a576d"/>
<rect x="788.5" y="775.5" width="21" height="21" fill="#fcf1c8" stroke="#e4c56c"/>
<path d="M795.5,779.5 v12 l2.8,-2.8 l2.5,4.8 l1.8,-1 l-2.5,-4.6 h3.8 z" fill="#fff" stroke="#000" stroke-width="1.1"/>
<path d="M814,786.5 h14 M821,779.5 v14" stroke="#000" stroke-width="1.5"/><path d="M821,779 l-2.5,3 h5 z M821,794 l-2.5,-3 h5 z M813.5,786.5 l3,-2.5 v5 z M828.5,786.5 l-3,-2.5 v5 z" fill="#000"/><path d="M821,782.5 l4,4 l-4,4 l-4,-4 z" fill="none" stroke="#000" stroke-width="1.6"/>
<path d="M847,782.5 a5,5 0 1 0 1,4" fill="none" stroke="#000" stroke-width="2"/><path d="M844,780 l4.5,0 l0,4.5 z" fill="#000"/>
<path d="M858,786.5 h14 M865,779.5 v14" stroke="#000" stroke-width="2"/><path d="M865,779 l-3,3.5 h6 z M865,794 l-3,-3.5 h6 z M857.5,786.5 l3.5,-3 v6 z M872.5,786.5 l-3.5,-3 v6 z" fill="#000"/>
<path d="M895,777 l3,2.5 l3,-2.5 M895,780 l3,2.5 l3,-2.5" fill="none" stroke="#333" stroke-width="0.9"/><path d="M894.5,789.5 h7 l-3.5,3.5 z" fill="#333"/>
<rect x="906" y="773" width="2.5" height="25" fill="#e6e9f2"/>
<rect x="916" y="778" width="1" height="1" fill="#4a576d"/><rect x="920" y="778" width="1" height="1" fill="#4a576d"/>
<rect x="918" y="780" width="1" height="1" fill="#4a576d"/>
<rect x="916" y="782" width="1" height="1" fill="#4a576d"/><rect x="920" y="782" width="1" height="1" fill="#4a576d"/>
<rect x="918" y="784" width="1" height="1" fill="#4a576d"/>
<rect x="916" y="786" width="1" height="1" fill="#4a576d"/><rect x="920" y="786" width="1" height="1" fill="#4a576d"/>
<rect x="918" y="788" width="1" height="1" fill="#4a576d"/>
<rect x="916" y="790" width="1" height="1" fill="#4a576d"/><rect x="920" y="790" width="1" height="1" fill="#4a576d"/>
<rect x="918" y="792" width="1" height="1" fill="#4a576d"/>
<rect x="916" y="794" width="1" height="1" fill="#4a576d"/><rect x="920" y="794" width="1" height="1" fill="#4a576d"/>
<path d="M932.5,780 v12.5 h14 M935.5,784 v8.5 M938.5,784 v8.5 M941.5,784 v8.5 M944.5,784 v8.5" fill="none" stroke="#000" stroke-width="1"/>
<path d="M952,777 l3,2.5 l3,-2.5 M952,780 l3,2.5 l3,-2.5" fill="none" stroke="#333" stroke-width="0.9"/><path d="M951.5,789.5 h7 l-3.5,3.5 z" fill="#333"/>
<path d="M326.5,805.5 l10,9.5" stroke="#000" stroke-width="3"/><path d="M327,806 l9,8.5" stroke="#8a8a00" stroke-width="1.6"/><path d="M326.5,805.5 l2.5,2.5" stroke="#ffff00" stroke-width="2"/>
<circle cx="327" cy="812.7" r="2.4" fill="#8a8a00" stroke="#000" stroke-width="0.8"/><circle cx="323" cy="809.8" r="2.4" fill="#ffff00" stroke="#000" stroke-width="0.8"/><circle cx="323" cy="816" r="2.4" fill="#ffff00" stroke="#000" stroke-width="0.8"/>
<circle cx="334.5" cy="805.5" r="1.8" fill="#ffff00"/><path d="M334.5,801.5 v8 M330.5,805.5 h7.5" stroke="#ffff00" stroke-width="1"/><rect x="332" y="803" width="1" height="1" fill="#ffff00"/><rect x="336" y="803" width="1" height="1" fill="#ffff00"/><rect x="332" y="807" width="1" height="1" fill="#ffff00"/><rect x="336" y="807" width="1" height="1" fill="#ffff00"/>
<rect x="450" y="803" width="14" height="14" fill="#c4b48c"/><rect x="451" y="804" width="5.5" height="5.5" fill="#0a5a9a"/><rect x="457.5" y="804" width="5.5" height="5.5" fill="#0a5a9a"/><rect x="451" y="810.5" width="5.5" height="5.5" fill="#0a5a9a"/><rect x="457.5" y="810.5" width="5.5" height="5.5" fill="#0a5a9a"/>
<path d="M454,806.5 l2.5,2.5 M460,806.5 l-2.5,2.5 M454,813.5 l2.5,-2.5 M460,813.5 l-2.5,-2.5" stroke="#c4b48c" stroke-width="1.2"/>
<rect x="567" y="806" width="12" height="9" rx="1.5" fill="#8a8a8a"/><rect x="570" y="804.5" width="5" height="2" fill="#8a8a8a"/><circle cx="573" cy="810.5" r="2.8" fill="#5a7aa0" stroke="#b0b0b0" stroke-width="1"/>
<rect x="957.5" y="807.5" width="1.3" height="1.3" fill="#a8c0d8"/>
<rect x="954.5" y="810.5" width="1.3" height="1.3" fill="#a8c0d8"/>
<rect x="957.5" y="810.5" width="1.3" height="1.3" fill="#a8c0d8"/>
<rect x="951.5" y="813.5" width="1.3" height="1.3" fill="#a8c0d8"/>
<rect x="954.5" y="813.5" width="1.3" height="1.3" fill="#a8c0d8"/>
<rect x="957.5" y="813.5" width="1.3" height="1.3" fill="#a8c0d8"/></svg>
<svg class="a" style="left:0;top:0" width="964" height="820" viewBox="0 0 964 820">
<defs>
<radialGradient id="gC" cx="0.62" cy="0.34" r="0.78" fx="0.66" fy="0.3"><stop offset="0" stop-color="#ffffff"/><stop offset="0.12" stop-color="#f6f6f6"/><stop offset="0.5" stop-color="#c6c6c6"/><stop offset="0.85" stop-color="#8c8c8c"/><stop offset="1" stop-color="#5a5a5a"/></radialGradient>
<radialGradient id="gH" cx="0.64" cy="0.32" r="0.75" fx="0.66" fy="0.3"><stop offset="0" stop-color="#ffffff"/><stop offset="0.4" stop-color="#f4f4f4"/><stop offset="1" stop-color="#b0b0b0"/></radialGradient>
<radialGradient id="gO" cx="0.64" cy="0.32" r="0.75" fx="0.66" fy="0.3"><stop offset="0" stop-color="#ffc8c8"/><stop offset="0.2" stop-color="#ff2020"/><stop offset="0.6" stop-color="#e00000"/><stop offset="1" stop-color="#8a0000"/></radialGradient>
<radialGradient id="gN" cx="0.64" cy="0.32" r="0.75" fx="0.66" fy="0.3"><stop offset="0" stop-color="#a0a0ff"/><stop offset="0.2" stop-color="#2020ff"/><stop offset="0.6" stop-color="#0000d8"/><stop offset="1" stop-color="#000080"/></radialGradient>
<radialGradient id="gK" cx="0.64" cy="0.32" r="0.75" fx="0.66" fy="0.3"><stop offset="0" stop-color="#707070"/><stop offset="0.3" stop-color="#202020"/><stop offset="1" stop-color="#000"/></radialGradient>
</defs>
<polygon points="361,317 373.6,339.7 367.3,372.7 348.4,383.2 335,360 341.7,326.8" fill="#baaacb"/>
<polygon points="317.1,519.8 332.7,536.5 336,569.6 324.5,587 310.5,569.6 307.3,536.5" fill="#7ef4f4"/>
<polygon points="523,330.4 534.2,347.4 530.7,381.3 515.6,397.2 505.6,380.4 509.1,347.4" fill="#7ef4f4"/>
<polygon points="547.1,534 566.2,545 572.7,578 559.7,601 540.3,590.7 534.6,558" fill="#baaacb"/>
<g stroke="#dcae00" stroke-width="2.6">
<line x1="346.8" y1="433.2" x2="352.8" y2="418"/>
<line x1="346.8" y1="433.2" x2="322.8" y2="459.8"/>
<line x1="341.4" y1="519.3" x2="326.5" y2="526"/>
<line x1="540" y1="399" x2="524.5" y2="393.7"/>
<line x1="521.3" y1="458" x2="545.4" y2="484.7"/>
<line x1="545.4" y1="484.7" x2="553.2" y2="476.6"/>
<line x1="545.4" y1="484.7" x2="551.6" y2="501.5"/>
</g>
<g stroke="#ffd400" stroke-width="1.4">
<line x1="346.8" y1="433.2" x2="352.8" y2="418"/>
<line x1="346.8" y1="433.2" x2="322.8" y2="459.8"/>
<line x1="341.4" y1="519.3" x2="326.5" y2="526"/>
<line x1="540" y1="399" x2="524.5" y2="393.7"/>
<line x1="521.3" y1="458" x2="545.4" y2="484.7"/>
<line x1="545.4" y1="484.7" x2="553.2" y2="476.6"/>
<line x1="545.4" y1="484.7" x2="551.6" y2="501.5"/>
</g>
<circle cx="346.8" cy="433.2" r="6.7" fill="url(#gC)"/>
<circle cx="545.4" cy="484.7" r="6.7" fill="url(#gC)"/>
<circle cx="352.8" cy="418" r="3.1" fill="url(#gH)"/>
<circle cx="326.5" cy="526" r="3.1" fill="url(#gH)"/>
<circle cx="524.5" cy="393.7" r="3.1" fill="url(#gH)"/>
<g stroke="#dcae00" stroke-width="2.6">
<line x1="361" y1="317" x2="341.7" y2="326.8"/>
<line x1="361" y1="317" x2="373.6" y2="339.7"/>
<line x1="341.7" y1="326.8" x2="335" y2="360"/>
<line x1="373.6" y1="339.7" x2="367.3" y2="372.7"/>
<line x1="335" y1="360" x2="348.4" y2="383.2"/>
<line x1="367.3" y1="372.7" x2="348.4" y2="383.2"/>
<line x1="361" y1="317" x2="364.8" y2="295"/>
<line x1="341.7" y1="326.8" x2="332" y2="311.4"/>
<line x1="373.6" y1="339.7" x2="386" y2="333.8"/>
<line x1="335" y1="360" x2="322.4" y2="366.3"/>
<line x1="367.3" y1="372.7" x2="376.4" y2="388.8"/>
<line x1="348.4" y1="383.2" x2="339.2" y2="419.2"/>
<line x1="339.2" y1="419.2" x2="314.5" y2="421"/>
<line x1="339.2" y1="419.2" x2="354.5" y2="441.3"/>
<line x1="322.8" y1="459.8" x2="294.7" y2="460.9"/>
<line x1="322.8" y1="459.8" x2="343.7" y2="484.4"/>
<line x1="343.7" y1="484.4" x2="370.7" y2="461.8"/>
<line x1="354.5" y1="441.3" x2="380.5" y2="459.2"/>
<line x1="354.5" y1="441.3" x2="370.7" y2="461.8"/>
<line x1="380.5" y1="459.2" x2="413.6" y2="443"/>
<line x1="380.5" y1="459.2" x2="399.2" y2="467.3"/>
<line x1="380.5" y1="459.2" x2="381" y2="481.6"/>
<line x1="413.6" y1="443" x2="413" y2="421.5"/>
<line x1="413.6" y1="443" x2="419.8" y2="442"/>
<line x1="413.6" y1="443" x2="440.3" y2="462.3"/>
<line x1="399.2" y1="467.3" x2="430.4" y2="468"/>
<line x1="430.4" y1="468" x2="440.3" y2="462.3"/>
<line x1="440.3" y1="462.3" x2="470.6" y2="444.9"/>
<line x1="470.6" y1="444.9" x2="479.6" y2="448"/>
<line x1="440.3" y1="462.3" x2="442.8" y2="484"/>
<line x1="430.4" y1="468" x2="446.6" y2="473.5"/>
<line x1="343.7" y1="484.4" x2="341.4" y2="519.3"/>
<line x1="341.4" y1="519.3" x2="363.2" y2="528.5"/>
<line x1="341.4" y1="519.3" x2="332.7" y2="536.5"/>
<line x1="317.1" y1="519.8" x2="332.7" y2="536.5"/>
<line x1="317.1" y1="519.8" x2="307.3" y2="536.5"/>
<line x1="332.7" y1="536.5" x2="336" y2="569.6"/>
<line x1="307.3" y1="536.5" x2="310.5" y2="569.6"/>
<line x1="310.5" y1="569.6" x2="324.5" y2="587"/>
<line x1="336" y1="569.6" x2="324.5" y2="587"/>
<line x1="317.1" y1="519.8" x2="314.2" y2="497.3"/>
<line x1="307.3" y1="536.5" x2="296.5" y2="525.7"/>
<line x1="310.5" y1="569.6" x2="302.8" y2="581.6"/>
<line x1="336" y1="569.6" x2="343.4" y2="582.8"/>
<line x1="324.5" y1="587" x2="326" y2="610"/>
<line x1="523" y1="330.4" x2="509.1" y2="347.4"/>
<line x1="523" y1="330.4" x2="534.2" y2="347.4"/>
<line x1="509.1" y1="347.4" x2="505.6" y2="380.4"/>
<line x1="534.2" y1="347.4" x2="530.7" y2="381.3"/>
<line x1="505.6" y1="380.4" x2="515.6" y2="397.2"/>
<line x1="530.7" y1="381.3" x2="515.6" y2="397.2"/>
<line x1="523" y1="330.4" x2="525" y2="308.5"/>
<line x1="509.1" y1="347.4" x2="501.5" y2="336.8"/>
<line x1="534.2" y1="347.4" x2="542.7" y2="337.1"/>
<line x1="505.6" y1="380.4" x2="496.2" y2="392.8"/>
<line x1="515.6" y1="397.2" x2="513" y2="421.1"/>
<line x1="530.7" y1="381.3" x2="540" y2="399"/>
<line x1="540" y1="399" x2="561.6" y2="391"/>
<line x1="540" y1="399" x2="542.2" y2="434"/>
<line x1="542.2" y1="434" x2="521.3" y2="458"/>
<line x1="521.3" y1="458" x2="494" y2="458"/>
<line x1="542.2" y1="434" x2="569.2" y2="456"/>
<line x1="537.9" y1="498.4" x2="553.2" y2="476.6"/>
<line x1="537.9" y1="498.4" x2="513.4" y2="498.2"/>
<line x1="537.9" y1="498.4" x2="547.1" y2="534"/>
<line x1="553.2" y1="476.6" x2="569.2" y2="456"/>
<line x1="553.2" y1="476.6" x2="579.1" y2="459.2"/>
<line x1="579.1" y1="459.2" x2="579.6" y2="436.9"/>
<line x1="579.1" y1="459.2" x2="597.8" y2="450.3"/>
<line x1="579.1" y1="459.2" x2="612.6" y2="474.6"/>
<line x1="597.8" y1="450.3" x2="628.8" y2="450"/>
<line x1="628.8" y1="450" x2="638.9" y2="455.7"/>
<line x1="612.6" y1="474.6" x2="638.9" y2="455.7"/>
<line x1="638.9" y1="455.7" x2="669" y2="473.3"/>
<line x1="669" y1="473.3" x2="678" y2="472"/>
<line x1="612.6" y1="474.6" x2="611" y2="497.5"/>
<line x1="612.6" y1="474.6" x2="618" y2="477.3"/>
<line x1="638.9" y1="455.7" x2="641.6" y2="434.8"/>
<line x1="628.8" y1="450" x2="645.6" y2="447.6"/>
<line x1="547.1" y1="534" x2="566.2" y2="545"/>
<line x1="547.1" y1="534" x2="534.6" y2="558"/>
<line x1="566.2" y1="545" x2="572.7" y2="578"/>
<line x1="534.6" y1="558" x2="540.3" y2="590.7"/>
<line x1="572.7" y1="578" x2="559.7" y2="601"/>
<line x1="540.3" y1="590.7" x2="559.7" y2="601"/>
<line x1="566.2" y1="545" x2="574.8" y2="530.6"/>
<line x1="534.6" y1="558" x2="521" y2="551.1"/>
<line x1="572.7" y1="578" x2="585" y2="586.5"/>
<line x1="540.3" y1="590.7" x2="530.7" y2="607"/>
<line x1="559.7" y1="601" x2="563.7" y2="624"/>
</g>
<g stroke="#ffd400" stroke-width="1.4">
<line x1="361" y1="317" x2="341.7" y2="326.8"/>
<line x1="361" y1="317" x2="373.6" y2="339.7"/>
<line x1="341.7" y1="326.8" x2="335" y2="360"/>
<line x1="373.6" y1="339.7" x2="367.3" y2="372.7"/>
<line x1="335" y1="360" x2="348.4" y2="383.2"/>
<line x1="367.3" y1="372.7" x2="348.4" y2="383.2"/>
<line x1="361" y1="317" x2="364.8" y2="295"/>
<line x1="341.7" y1="326.8" x2="332" y2="311.4"/>
<line x1="373.6" y1="339.7" x2="386" y2="333.8"/>
<line x1="335" y1="360" x2="322.4" y2="366.3"/>
<line x1="367.3" y1="372.7" x2="376.4" y2="388.8"/>
<line x1="348.4" y1="383.2" x2="339.2" y2="419.2"/>
<line x1="339.2" y1="419.2" x2="314.5" y2="421"/>
<line x1="339.2" y1="419.2" x2="354.5" y2="441.3"/>
<line x1="322.8" y1="459.8" x2="294.7" y2="460.9"/>
<line x1="322.8" y1="459.8" x2="343.7" y2="484.4"/>
<line x1="343.7" y1="484.4" x2="370.7" y2="461.8"/>
<line x1="354.5" y1="441.3" x2="380.5" y2="459.2"/>
<line x1="354.5" y1="441.3" x2="370.7" y2="461.8"/>
<line x1="380.5" y1="459.2" x2="413.6" y2="443"/>
<line x1="380.5" y1="459.2" x2="399.2" y2="467.3"/>
<line x1="380.5" y1="459.2" x2="381" y2="481.6"/>
<line x1="413.6" y1="443" x2="413" y2="421.5"/>
<line x1="413.6" y1="443" x2="419.8" y2="442"/>
<line x1="413.6" y1="443" x2="440.3" y2="462.3"/>
<line x1="399.2" y1="467.3" x2="430.4" y2="468"/>
<line x1="430.4" y1="468" x2="440.3" y2="462.3"/>
<line x1="440.3" y1="462.3" x2="470.6" y2="444.9"/>
<line x1="470.6" y1="444.9" x2="479.6" y2="448"/>
<line x1="440.3" y1="462.3" x2="442.8" y2="484"/>
<line x1="430.4" y1="468" x2="446.6" y2="473.5"/>
<line x1="343.7" y1="484.4" x2="341.4" y2="519.3"/>
<line x1="341.4" y1="519.3" x2="363.2" y2="528.5"/>
<line x1="341.4" y1="519.3" x2="332.7" y2="536.5"/>
<line x1="317.1" y1="519.8" x2="332.7" y2="536.5"/>
<line x1="317.1" y1="519.8" x2="307.3" y2="536.5"/>
<line x1="332.7" y1="536.5" x2="336" y2="569.6"/>
<line x1="307.3" y1="536.5" x2="310.5" y2="569.6"/>
<line x1="310.5" y1="569.6" x2="324.5" y2="587"/>
<line x1="336" y1="569.6" x2="324.5" y2="587"/>
<line x1="317.1" y1="519.8" x2="314.2" y2="497.3"/>
<line x1="307.3" y1="536.5" x2="296.5" y2="525.7"/>
<line x1="310.5" y1="569.6" x2="302.8" y2="581.6"/>
<line x1="336" y1="569.6" x2="343.4" y2="582.8"/>
<line x1="324.5" y1="587" x2="326" y2="610"/>
<line x1="523" y1="330.4" x2="509.1" y2="347.4"/>
<line x1="523" y1="330.4" x2="534.2" y2="347.4"/>
<line x1="509.1" y1="347.4" x2="505.6" y2="380.4"/>
<line x1="534.2" y1="347.4" x2="530.7" y2="381.3"/>
<line x1="505.6" y1="380.4" x2="515.6" y2="397.2"/>
<line x1="530.7" y1="381.3" x2="515.6" y2="397.2"/>
<line x1="523" y1="330.4" x2="525" y2="308.5"/>
<line x1="509.1" y1="347.4" x2="501.5" y2="336.8"/>
<line x1="534.2" y1="347.4" x2="542.7" y2="337.1"/>
<line x1="505.6" y1="380.4" x2="496.2" y2="392.8"/>
<line x1="515.6" y1="397.2" x2="513" y2="421.1"/>
<line x1="530.7" y1="381.3" x2="540" y2="399"/>
<line x1="540" y1="399" x2="561.6" y2="391"/>
<line x1="540" y1="399" x2="542.2" y2="434"/>
<line x1="542.2" y1="434" x2="521.3" y2="458"/>
<line x1="521.3" y1="458" x2="494" y2="458"/>
<line x1="542.2" y1="434" x2="569.2" y2="456"/>
<line x1="537.9" y1="498.4" x2="553.2" y2="476.6"/>
<line x1="537.9" y1="498.4" x2="513.4" y2="498.2"/>
<line x1="537.9" y1="498.4" x2="547.1" y2="534"/>
<line x1="553.2" y1="476.6" x2="569.2" y2="456"/>
<line x1="553.2" y1="476.6" x2="579.1" y2="459.2"/>
<line x1="579.1" y1="459.2" x2="579.6" y2="436.9"/>
<line x1="579.1" y1="459.2" x2="597.8" y2="450.3"/>
<line x1="579.1" y1="459.2" x2="612.6" y2="474.6"/>
<line x1="597.8" y1="450.3" x2="628.8" y2="450"/>
<line x1="628.8" y1="450" x2="638.9" y2="455.7"/>
<line x1="612.6" y1="474.6" x2="638.9" y2="455.7"/>
<line x1="638.9" y1="455.7" x2="669" y2="473.3"/>
<line x1="669" y1="473.3" x2="678" y2="472"/>
<line x1="612.6" y1="474.6" x2="611" y2="497.5"/>
<line x1="612.6" y1="474.6" x2="618" y2="477.3"/>
<line x1="638.9" y1="455.7" x2="641.6" y2="434.8"/>
<line x1="628.8" y1="450" x2="645.6" y2="447.6"/>
<line x1="547.1" y1="534" x2="566.2" y2="545"/>
<line x1="547.1" y1="534" x2="534.6" y2="558"/>
<line x1="566.2" y1="545" x2="572.7" y2="578"/>
<line x1="534.6" y1="558" x2="540.3" y2="590.7"/>
<line x1="572.7" y1="578" x2="559.7" y2="601"/>
<line x1="540.3" y1="590.7" x2="559.7" y2="601"/>
<line x1="566.2" y1="545" x2="574.8" y2="530.6"/>
<line x1="534.6" y1="558" x2="521" y2="551.1"/>
<line x1="572.7" y1="578" x2="585" y2="586.5"/>
<line x1="540.3" y1="590.7" x2="530.7" y2="607"/>
<line x1="559.7" y1="601" x2="563.7" y2="624"/>
</g>
<circle cx="364.8" cy="295" r="3.1" fill="url(#gH)"/>
<circle cx="332" cy="311.4" r="3.1" fill="url(#gH)"/>
<circle cx="386" cy="333.8" r="3.1" fill="url(#gH)"/>
<circle cx="322.4" cy="366.3" r="3.1" fill="url(#gH)"/>
<circle cx="376.4" cy="388.8" r="3.1" fill="url(#gH)"/>
<circle cx="314.5" cy="421" r="3.1" fill="url(#gH)"/>
<circle cx="381" cy="481.6" r="3.1" fill="url(#gH)"/>
<circle cx="413" cy="421.5" r="3.1" fill="url(#gH)"/>
<circle cx="419.8" cy="442" r="3.1" fill="url(#gH)"/>
<circle cx="479.6" cy="448" r="3.1" fill="url(#gH)"/>
<circle cx="442.8" cy="484" r="3.1" fill="url(#gH)"/>
<circle cx="446.6" cy="473.5" r="3.1" fill="url(#gH)"/>
<circle cx="363.2" cy="528.5" r="3.1" fill="url(#gH)"/>
<circle cx="314.2" cy="497.3" r="3.1" fill="url(#gH)"/>
<circle cx="296.5" cy="525.7" r="3.1" fill="url(#gH)"/>
<circle cx="302.8" cy="581.6" r="3.1" fill="url(#gH)"/>
<circle cx="343.4" cy="582.8" r="3.1" fill="url(#gH)"/>
<circle cx="326" cy="610" r="3.1" fill="url(#gH)"/>
<circle cx="525" cy="308.5" r="3.1" fill="url(#gH)"/>
<circle cx="501.5" cy="336.8" r="3.1" fill="url(#gH)"/>
<circle cx="542.7" cy="337.1" r="3.1" fill="url(#gH)"/>
<circle cx="496.2" cy="392.8" r="3.1" fill="url(#gH)"/>
<circle cx="513" cy="421.1" r="3.1" fill="url(#gH)"/>
<circle cx="561.6" cy="391" r="3.1" fill="url(#gH)"/>
<circle cx="513.4" cy="498.2" r="3.1" fill="url(#gH)"/>
<circle cx="551.6" cy="501.5" r="3.1" fill="url(#gH)"/>
<circle cx="579.6" cy="436.9" r="3.1" fill="url(#gH)"/>
<circle cx="611" cy="497.5" r="3.1" fill="url(#gH)"/>
<circle cx="618" cy="477.3" r="3.1" fill="url(#gH)"/>
<circle cx="641.6" cy="434.8" r="3.1" fill="url(#gH)"/>
<circle cx="645.6" cy="447.6" r="3.1" fill="url(#gH)"/>
<circle cx="678" cy="472" r="3.1" fill="url(#gH)"/>
<circle cx="574.8" cy="530.6" r="3.1" fill="url(#gH)"/>
<circle cx="521" cy="551.1" r="3.1" fill="url(#gH)"/>
<circle cx="585" cy="586.5" r="3.1" fill="url(#gH)"/>
<circle cx="530.7" cy="607" r="3.1" fill="url(#gH)"/>
<circle cx="563.7" cy="624" r="3.1" fill="url(#gH)"/>
<circle cx="361" cy="317" r="6.7" fill="url(#gC)"/>
<circle cx="341.7" cy="326.8" r="6.7" fill="url(#gC)"/>
<circle cx="373.6" cy="339.7" r="6.7" fill="url(#gC)"/>
<circle cx="335" cy="360" r="6.7" fill="url(#gC)"/>
<circle cx="367.3" cy="372.7" r="6.7" fill="url(#gC)"/>
<circle cx="348.4" cy="383.2" r="6.7" fill="url(#gC)"/>
<circle cx="339.2" cy="419.2" r="6.7" fill="url(#gC)"/>
<circle cx="354.5" cy="441.3" r="6.2" fill="url(#gO)"/>
<circle cx="322.8" cy="459.8" r="6.7" fill="url(#gC)"/>
<circle cx="294.7" cy="460.9" r="6.2" fill="url(#gO)"/>
<circle cx="343.7" cy="484.4" r="6.2" fill="url(#gN)"/>
<circle cx="370.7" cy="461.8" r="6.7" fill="url(#gC)"/>
<circle cx="380.5" cy="459.2" r="6.7" fill="url(#gC)"/>
<circle cx="413.6" cy="443" r="6.7" fill="url(#gC)"/>
<circle cx="399.2" cy="467.3" r="6.7" fill="url(#gC)"/>
<circle cx="430.4" cy="468" r="6.7" fill="url(#gC)"/>
<circle cx="440.3" cy="462.3" r="6.7" fill="url(#gC)"/>
<circle cx="470.6" cy="444.9" r="6.2" fill="url(#gO)"/>
<circle cx="341.4" cy="519.3" r="6.7" fill="url(#gC)"/>
<circle cx="317.1" cy="519.8" r="6.7" fill="url(#gC)"/>
<circle cx="332.7" cy="536.5" r="6.7" fill="url(#gC)"/>
<circle cx="307.3" cy="536.5" r="6.7" fill="url(#gC)"/>
<circle cx="310.5" cy="569.6" r="6.7" fill="url(#gC)"/>
<circle cx="336" cy="569.6" r="6.7" fill="url(#gC)"/>
<circle cx="324.5" cy="587" r="6.7" fill="url(#gC)"/>
<circle cx="523" cy="330.4" r="6.7" fill="url(#gC)"/>
<circle cx="509.1" cy="347.4" r="6.7" fill="url(#gC)"/>
<circle cx="534.2" cy="347.4" r="6.7" fill="url(#gC)"/>
<circle cx="505.6" cy="380.4" r="6.7" fill="url(#gC)"/>
<circle cx="530.7" cy="381.3" r="6.7" fill="url(#gC)"/>
<circle cx="515.6" cy="397.2" r="6.7" fill="url(#gC)"/>
<circle cx="540" cy="399" r="6.7" fill="url(#gC)"/>
<circle cx="542.2" cy="434" r="6.2" fill="url(#gN)"/>
<circle cx="521.3" cy="458" r="6.7" fill="url(#gC)"/>
<circle cx="494" cy="458" r="6.2" fill="url(#gO)"/>
<circle cx="553.2" cy="476.6" r="6.2" fill="url(#gO)"/>
<circle cx="537.9" cy="498.4" r="6.7" fill="url(#gC)"/>
<circle cx="569.2" cy="456" r="6.7" fill="url(#gC)"/>
<circle cx="579.1" cy="459.2" r="6.7" fill="url(#gC)"/>
<circle cx="597.8" cy="450.3" r="6.7" fill="url(#gC)"/>
<circle cx="628.8" cy="450" r="6.7" fill="url(#gC)"/>
<circle cx="638.9" cy="455.7" r="6.7" fill="url(#gC)"/>
<circle cx="612.6" cy="474.6" r="6.7" fill="url(#gC)"/>
<circle cx="669" cy="473.3" r="6.2" fill="url(#gO)"/>
<circle cx="547.1" cy="534" r="6.7" fill="url(#gC)"/>
<circle cx="566.2" cy="545" r="6.7" fill="url(#gC)"/>
<circle cx="534.6" cy="558" r="6.7" fill="url(#gC)"/>
<circle cx="572.7" cy="578" r="6.7" fill="url(#gC)"/>
<circle cx="540.3" cy="590.7" r="6.7" fill="url(#gC)"/>
<circle cx="559.7" cy="601" r="6.7" fill="url(#gC)"/>
<defs>
<clipPath id="pc0"><polygon points="361,317 373.6,339.7 367.3,372.7 348.4,383.2 335,360 341.7,326.8"/></clipPath>
<clipPath id="pc1"><polygon points="317.1,519.8 332.7,536.5 336,569.6 324.5,587 310.5,569.6 307.3,536.5"/></clipPath>
<clipPath id="pc2"><polygon points="523,330.4 534.2,347.4 530.7,381.3 515.6,397.2 505.6,380.4 509.1,347.4"/></clipPath>
<clipPath id="pc3"><polygon points="547.1,534 566.2,545 572.7,578 559.7,601 540.3,590.7 534.6,558"/></clipPath>
</defs>
<circle cx="341.7" cy="326.8" r="6.7" fill="#baaacb" clip-path="url(#pc0)" style="mix-blend-mode:multiply" opacity="0.9"/>
<circle cx="335" cy="360" r="6.7" fill="#baaacb" clip-path="url(#pc0)" style="mix-blend-mode:multiply" opacity="0.9"/>
<circle cx="332.7" cy="536.5" r="6.7" fill="#7ef4f4" clip-path="url(#pc1)" style="mix-blend-mode:multiply" opacity="0.9"/>
<circle cx="336" cy="569.6" r="6.7" fill="#7ef4f4" clip-path="url(#pc1)" style="mix-blend-mode:multiply" opacity="0.9"/>
<circle cx="534.2" cy="347.4" r="6.7" fill="#7ef4f4" clip-path="url(#pc2)" style="mix-blend-mode:multiply" opacity="0.9"/>
<circle cx="530.7" cy="381.3" r="6.7" fill="#7ef4f4" clip-path="url(#pc2)" style="mix-blend-mode:multiply" opacity="0.9"/>
<circle cx="534.6" cy="558" r="6.7" fill="#baaacb" clip-path="url(#pc3)" style="mix-blend-mode:multiply" opacity="0.9"/>
<text x="354" y="354.5" font-size="10" font-family="Liberation Sans" text-anchor="middle" fill="#000">A</text>
<text x="319.5" y="556.5" font-size="10" font-family="Liberation Sans" text-anchor="middle" fill="#000">B</text>
<g stroke="#000" stroke-width="1.2" fill="none"><path d="M289,156 V175.5 H310"/></g>
<path d="M303,173 L308,175.5 L303,178 Z M287,160 L289,154 L291,160 Z" fill="#000"/>
<text x="289" y="153" font-size="7" font-family="Liberation Sans" text-anchor="middle" fill="#000">b</text>
<text x="315.5" y="178" font-size="7" font-family="Liberation Sans" text-anchor="middle" fill="#000">a</text>
<rect x="264.5" y="701.5" width="15" height="62" fill="#fff" stroke="#000" stroke-width="1"/>
<circle cx="269.2" cy="707.5" r="5" fill="url(#gN)"/>
<text x="276.5" y="710.0" font-size="6" font-family="Liberation Sans" font-weight="bold" fill="#000">n</text>
<circle cx="269.2" cy="720.5" r="5" fill="url(#gO)"/>
<text x="276.5" y="723.0" font-size="6" font-family="Liberation Sans" font-weight="bold" fill="#000">o</text>
<circle cx="269.2" cy="733.6" r="5" fill="url(#gH)"/>
<text x="276.5" y="736.1" font-size="6" font-family="Liberation Sans" font-weight="bold" fill="#000">h</text>
<circle cx="269.2" cy="746.6" r="5" fill="url(#gC)"/>
<text x="276.5" y="749.1" font-size="6" font-family="Liberation Sans" font-weight="bold" fill="#000">c</text>
<circle cx="269.2" cy="759.7" r="5" fill="url(#gK)"/>
<text x="276.5" y="762.2" font-size="6" font-family="Liberation Sans" font-weight="bold" fill="#000">?</text>
</svg>
<div class="t" style="left:30.5px;top:9.8px;font-size:12px;font-weight:400;color:#000;letter-spacing:0.056px">Diamond - [cod-7106313-polygons.diamdoc]</div>
<div class="t" style="left:48.0px;top:37.6px;font-size:12px;font-weight:400;color:#000;letter-spacing:-0.554px">File</div>
<div class="t" style="left:84.0px;top:37.6px;font-size:12px;font-weight:400;color:#000;letter-spacing:-0.448px">Edit</div>
<div class="t" style="left:122.0px;top:37.6px;font-size:12px;font-weight:400;color:#000;letter-spacing:-0.376px">View</div>
<div class="t" style="left:165.0px;top:37.6px;font-size:12px;font-weight:400;color:#000;letter-spacing:-0.126px">Structure</div>
<div class="t" style="left:231.0px;top:37.6px;font-size:12px;font-weight:400;color:#000;letter-spacing:-0.112px">Picture</div>
<div class="t" style="left:286.0px;top:37.6px;font-size:12px;font-weight:400;color:#000;letter-spacing:-0.224px">Display</div>
<div class="t" style="left:342.0px;top:37.6px;font-size:12px;font-weight:400;color:#000;letter-spacing:0.248px">Build</div>
<div class="t" style="left:387.0px;top:37.6px;font-size:12px;font-weight:400;color:#000;letter-spacing:-0.114px">Objects</div>
<div class="t" style="left:445.6px;top:37.6px;font-size:12px;font-weight:400;color:#000;letter-spacing:-0.090px">Move</div>
<div class="t" style="left:493.0px;top:37.6px;font-size:12px;font-weight:400;color:#000;letter-spacing:-0.253px">Tools</div>
<div class="t" style="left:539.0px;top:37.6px;font-size:12px;font-weight:400;color:#000;letter-spacing:0.197px">Window</div>
<div class="t" style="left:601.0px;top:37.6px;font-size:12px;font-weight:400;color:#000;letter-spacing:-0.002px">Help</div>
<div class="t" style="left:60.0px;top:88.0px;font-size:13px;font-weight:700;color:#fff;letter-spacing:-0.023px">cod-7106313-polygons.diamdoc &gt; 7106313 &gt; Picture 1</div>
<div class="t" style="left:657.5px;top:88.8px;font-size:12px;font-weight:400;color:#fff;letter-spacing:-0.172px">Two molecules</div>
<div class="t" style="left:767.0px;top:88.8px;font-size:12px;font-weight:400;color:#fff;letter-spacing:0.045px">One phenyl ring with a polygon</div>
<div class="t" style="left:82.5px;top:116.8px;font-size:12px;font-weight:400;color:#6d6d6d;letter-spacing:-0.070px">No.</div>
<div class="t" style="left:104.9px;top:116.8px;font-size:12px;font-weight:400;color:#1e1e1e;letter-spacing:0.000px">1</div>
<div class="t" style="left:123.1px;top:116.8px;font-size:12px;font-weight:400;color:#6d6d6d;letter-spacing:-0.438px">Title</div>
<div class="t" style="left:147.2px;top:116.8px;font-size:12px;font-weight:400;color:#1e1e1e;letter-spacing:-0.924px">7106313</div>
<div class="t" style="left:201.5px;top:116.8px;font-size:12px;font-weight:400;color:#6d6d6d;letter-spacing:-0.757px">Pics</div>
<div class="t" style="left:225.2px;top:116.8px;font-size:12px;font-weight:400;color:#1e1e1e;letter-spacing:0.000px">3</div>
<div class="t" style="left:243.5px;top:116.8px;font-size:12px;font-weight:400;color:#6d6d6d;letter-spacing:-0.671px">Code</div>
<div class="t" style="left:274.5px;top:116.8px;font-size:12px;font-weight:400;color:#1e1e1e;letter-spacing:-0.957px">7106313</div>
<div class="t" style="left:328.4px;top:116.8px;font-size:12px;font-weight:400;color:#6d6d6d;letter-spacing:-0.122px">Formula sum</div>
<div class="t" style="left:401.3px;top:116.8px;font-size:12px;font-weight:400;color:#1e1e1e;letter-spacing:-0.494px">C22 H21 N O3</div>
<div class="t" style="left:487.6px;top:116.8px;font-size:12px;font-weight:400;color:#6d6d6d;letter-spacing:0.233px">HM symbol</div>
<div class="t" style="left:552.3px;top:116.8px;font-size:12px;font-weight:400;color:#1e1e1e;letter-spacing:-0.440px">P 1 21/c 1</div>
<div class="t" style="left:614.8px;top:116.8px;font-size:12px;font-weight:400;color:#6d6d6d;letter-spacing:-0.781px">SGR no.</div>
<div class="t" style="left:659.3px;top:116.8px;font-size:12px;font-weight:400;color:#1e1e1e;letter-spacing:-1.474px">14</div>
<div class="t" style="left:683.6px;top:116.8px;font-size:12px;font-weight:400;color:#6d6d6d;letter-spacing:-0.286px">Cell parameters</div>
<div class="t" style="left:768.0px;top:116.8px;font-size:12px;font-weight:400;color:#1e1e1e;letter-spacing:-0.573px">8.281,17.475,12.655,90.00,101.7...</div>
<div class="t" style="left:4.5px;top:803.8px;font-size:12px;font-weight:400;color:#fff;letter-spacing:-0.493px">For Help, press F1</div>
<div class="t" style="left:349.5px;top:803.8px;font-size:12px;font-weight:400;color:#000;letter-spacing:0.082px">Manual</div>
<div class="t" style="left:467.0px;top:803.8px;font-size:12px;font-weight:400;color:#fff;letter-spacing:-0.784px">1.16937</div>
<div class="t" style="left:521.8px;top:803.8px;font-size:12px;font-weight:400;color:#fff;letter-spacing:-1.724px">55%</div>
<div class="t" style="left:583.3px;top:803.8px;font-size:12px;font-weight:400;color:#fff;letter-spacing:0.000px">0</div>
<div class="t" style="left:609.4px;top:803.8px;font-size:12px;font-weight:400;color:#fff;letter-spacing:-0.389px">49 parms</div>
<div class="t" style="left:680.4px;top:803.8px;font-size:12px;font-weight:400;color:#fff;letter-spacing:-0.308px">98 atoms</div>
<div class="t" style="left:751.6px;top:803.8px;font-size:12px;font-weight:400;color:#fff;letter-spacing:-0.356px">102 bonds</div>
<div class="t" style="left:822.5px;top:803.8px;font-size:12px;font-weight:400;color:#fff;letter-spacing:-0.149px">2 mol.</div>
<div class="t" style="left:885.8px;top:803.8px;font-size:12px;font-weight:400;color:#fff;letter-spacing:0.001px">4 polyh.</div>
</body></html>
